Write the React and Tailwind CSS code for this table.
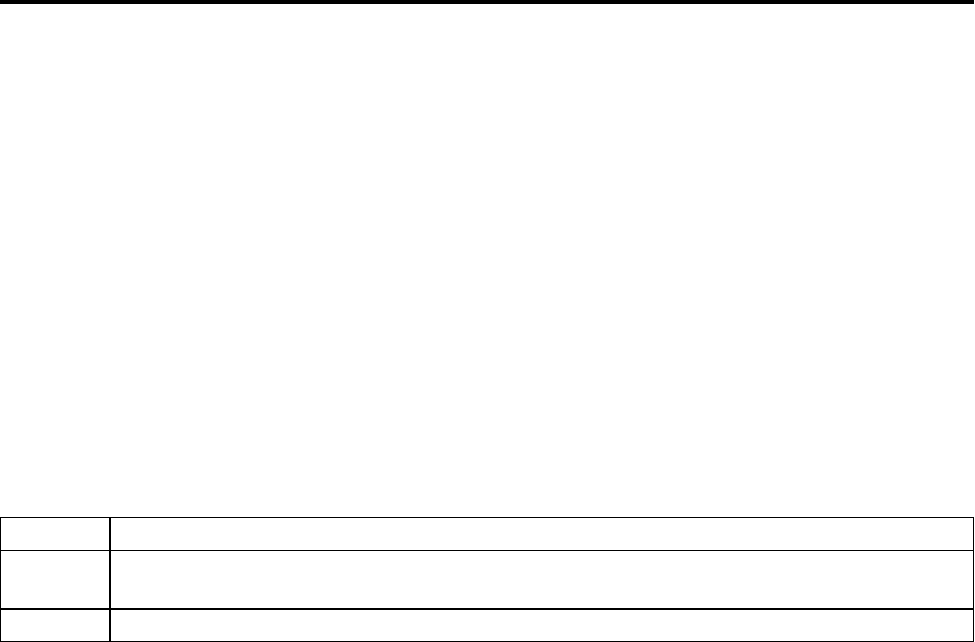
export default function App() {
  return (
    <div className="w-[975px] h-[642px] bg-white overflow-hidden" style={{ fontFamily: '"Liberation Sans", Arial, sans-serif' }}>
      <div className="h-1 w-[974px] bg-black" />
      <div className="mt-[513px] w-[974px] border border-black">
        <div className="flex h-[32px]">
          <div className="w-[110px] border-r-2 border-black" />
          <div className="flex-1" />
        </div>
        <div className="flex h-[58px] border-t border-black">
          <div className="w-[110px] border-r-2 border-black" />
          <div className="flex-1" />
        </div>
        <div className="flex h-[33px] border-t-2 border-black">
          <div className="w-[110px] border-r-2 border-black" />
          <div className="flex-1" />
        </div>
      </div>
    </div>
  );
}
